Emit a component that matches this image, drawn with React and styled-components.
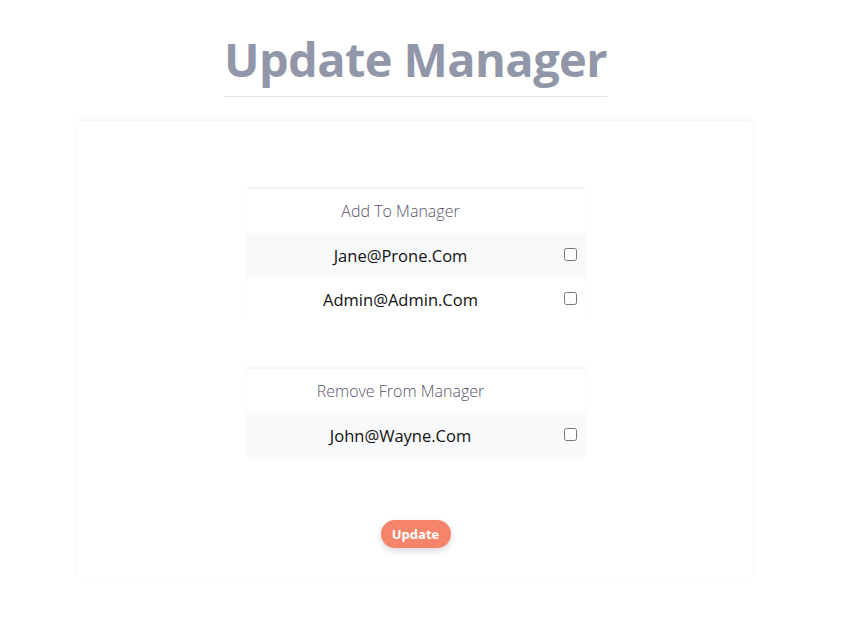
import React, { useState } from "react";
import styled, { createGlobalStyle } from "styled-components";

const GlobalStyle = createGlobalStyle`
    body {
        margin: 0;
        background: #ffffff;
        font-family: "Open Sans", "Noto Sans", sans-serif;
    }
`;

const addList = ["Jane@Prone.Com", "Admin@Admin.Com"];
const removeList = ["John@Wayne.Com"];

const UserTable = ({ title, users }) => {
    const [checked, setChecked] = useState({});

    return (
        <Table>
            <thead>
                <tr>
                    <HeadCell>{title}</HeadCell>
                    <HeadCell />
                </tr>
            </thead>
            <tbody>
                {users.map((user, i) => (
                    <Row key={user} $striped={i % 2 === 0}>
                        <EmailCell>{user}</EmailCell>
                        <CheckCell>
                            <input
                                type="checkbox"
                                checked={!!checked[user]}
                                onChange={() =>
                                    setChecked({ ...checked, [user]: !checked[user] })
                                }
                            />
                        </CheckCell>
                    </Row>
                ))}
            </tbody>
        </Table>
    );
};

const App = () => {
    return (
        <Page>
            <GlobalStyle />
            <Column>
                <Title>Update Manager</Title>
                <Card>
                    <UserTable title="Add To Manager" users={addList} />
                    <UserTable title="Remove From Manager" users={removeList} />
                    <UpdateButton>Update</UpdateButton>
                </Card>
            </Column>
        </Page>
    );
};

const Page = styled.div`
    padding: 25px 0 50px 78px;
`;

const Column = styled.div`
    width: 675px;
    display: flex;
    flex-direction: column;
    align-items: center;
`;

const Title = styled.h1`
    margin: 0;
    padding: 0 0 3px;
    font-size: 47px;
    font-weight: 700;
    line-height: 68px;
    color: #9197a9;
    border-bottom: 1px solid #e4e5e8;
    letter-spacing: -0.6px;
`;

const Card = styled.div`
    align-self: stretch;
    margin-top: 24px;
    height: 457px;
    box-sizing: border-box;
    padding: 68px 0 0;
    display: flex;
    flex-direction: column;
    align-items: center;
    gap: 48px;
    box-shadow: 0 -1px 4px rgba(0, 0, 0, 0.05);
`;

const Table = styled.table`
    width: 338px;
    border-collapse: collapse;
    box-shadow: 0 -2px 3px rgba(0, 0, 0, 0.05);
`;

const HeadCell = styled.th`
    height: 44px;
    padding: 0;
    font-size: 16px;
    font-weight: 300;
    color: #5a5268;
    text-align: center;
    &:last-child {
        width: 30px;
    }
`;

const Row = styled.tr`
    background: ${(p) => (p.$striped ? "#f8f9fb" : "#ffffff")};
`;

const EmailCell = styled.td`
    height: 44px;
    padding: 0;
    font-size: 16.5px;
    color: #111111;
    text-align: center;
`;

const CheckCell = styled.td`
    width: 30px;
    padding: 0;
    text-align: left;
    vertical-align: middle;
    input {
        margin: 2px 0 0 9px;
        width: 13px;
        height: 13px;
    }
`;

const UpdateButton = styled.button`
    margin-top: 15px;
    width: 70px;
    height: 28px;
    border: none;
    border-radius: 14px;
    background: #f5846a;
    color: #ffffff;
    font-family: "Open Sans", sans-serif;
    font-size: 13px;
    font-weight: 700;
    box-shadow: 0 3px 6px rgba(0, 0, 0, 0.15);
    cursor: pointer;
`;

export default App;
